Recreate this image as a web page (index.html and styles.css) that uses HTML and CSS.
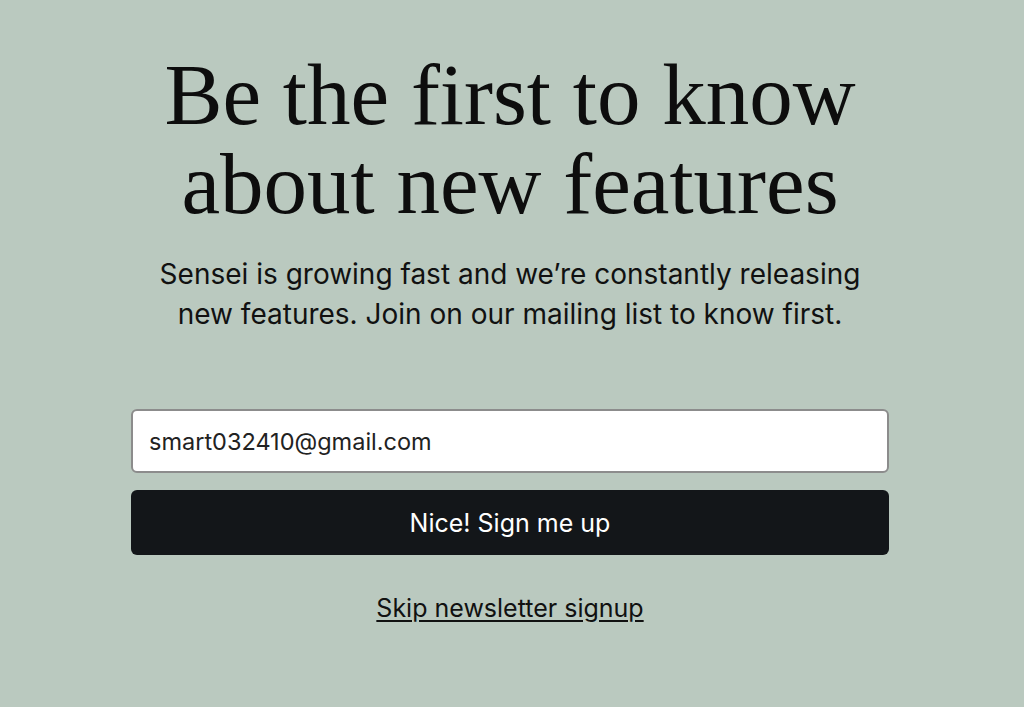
FILE: index.html
```html
<!DOCTYPE html>
<html>
<head>
<meta charset="utf-8">
<link rel="stylesheet" href="styles.css">
</head>
<body>
<main class="page">
  <h1 class="title">Be the first to know<br>about new features</h1>
  <p class="lead">Sensei is growing fast and we’re constantly releasing<br>new features. Join on our mailing list to know first.</p>
  <form class="signup">
    <input class="email" type="email" value="smart032410@gmail.com">
    <button class="submit" type="button">Nice! Sign me up</button>
  </form>
  <a class="skip" href="#">Skip newsletter signup</a>
</main>
</body>
</html>
```
FILE: styles.css
```css
html, body {
  margin: 0;
  padding: 0;
  background: #bac9bf;
  height: 100%;
}
.page {
  width: 758px;
  margin-left: 131px;
  display: flex;
  flex-direction: column;
  align-items: center;
  padding-top: 50px;
  font-family: Inter, "Liberation Sans", Arial, sans-serif;
  color: #111;
}
.title {
  margin: 0;
  font-family: "Liberation Serif", "Times New Roman", serif;
  font-weight: 400;
  font-size: 87px;
  line-height: 89px;
  text-align: center;
  letter-spacing: 0;
  color: #0d0d0d;
}
.lead {
  margin: 26px 0 0;
  font-size: 28px;
  line-height: 40px;
  text-align: center;
  color: #111;
  letter-spacing: 0;
}
.signup {
  margin-top: 75px;
  width: 100%;
  display: flex;
  flex-direction: column;
  gap: 17px;
}
.email {
  box-sizing: border-box;
  height: 64px;
  width: 100%;
  border: 2px solid #8c8c8c;
  border-radius: 6px;
  background: #fff;
  padding: 0 16px;
  font-family: Inter, "Liberation Sans", Arial, sans-serif;
  font-size: 23.5px;
  color: #222;
  outline: none;
}
.submit {
  height: 65px;
  width: 100%;
  border: none;
  border-radius: 6px;
  background: #131619;
  color: #fff;
  font-family: Inter, "Liberation Sans", Arial, sans-serif;
  font-size: 25px;
}
.skip {
  margin-top: 38px;
  font-size: 25px;
  color: #111;
  text-decoration: underline;
  text-underline-offset: 3px;
}
```
